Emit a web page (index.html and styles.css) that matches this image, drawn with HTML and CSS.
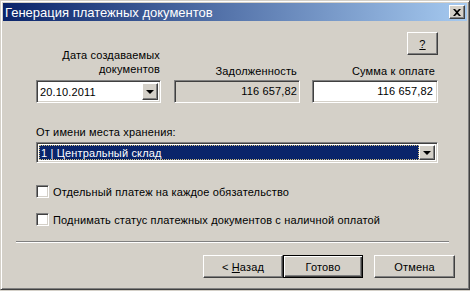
FILE: index.html
```html
<!DOCTYPE html>
<html lang="ru">
<head>
    <meta charset="UTF-8">
    <title>Генерация платежных документов</title>
    <link rel="stylesheet" href="styles.css">
</head>
<body>
    <div class="window">
        <!-- Заголовок окна -->
        <div class="titlebar">
            <span class="title">Генерация платежных документов</span>
            <button class="close-btn" type="button">
                <svg width="8" height="7" viewBox="0 0 8 7"><path d="M0 0h2l2 2 2-2h2L5 3.5 8 7H6L4 5 2 7H0l3-3.5z" fill="#000"/></svg>
            </button>
        </div>

        <div class="client">
            <!-- Даты и суммы -->
            <div class="fields">
                <div class="col col-date">
                    <label class="lbl lbl-two">Дата создаваемых<br>документов</label>
                    <div class="combo sunken">
                        <span class="combo-text">20.10.2011</span>
                        <span class="arrow-btn raised"><i class="arrow"></i></span>
                    </div>
                </div>
                <div class="col col-debt">
                    <label class="lbl">Задолженность</label>
                    <div class="edit sunken disabled">116 657,82</div>
                </div>
                <div class="col col-sum">
                    <button class="btn raised help-btn" type="button"><u>?</u></button>
                    <label class="lbl">Сумма к оплате</label>
                    <div class="edit sunken">116 657,82</div>
                </div>
            </div>

            <!-- Склад -->
            <div class="store">
                <label class="lbl-left">От имени места хранения:</label>
                <div class="combo sunken store-combo">
                    <span class="combo-text selected"><span class="focus">1 | Центральный склад</span></span>
                    <span class="arrow-btn raised"><i class="arrow"></i></span>
                </div>
            </div>

            <!-- Флажки -->
            <div class="checks">
                <label class="check"><span class="box sunken"></span>Отдельный платеж на каждое обязательство</label>
                <label class="check"><span class="box sunken"></span>Поднимать статус платежных документов с наличной оплатой</label>
            </div>

            <div class="separator"></div>

            <!-- Кнопки мастера -->
            <div class="buttons">
                <button class="btn raised" type="button">&lt; <u>Н</u>азад</button>
                <button class="btn raised default" type="button">Готово</button>
                <button class="btn raised cancel" type="button">Отмена</button>
            </div>
        </div>
    </div>
</body>
</html>
```

FILE: styles.css
```css
/* Общие настройки */
body {
    margin: 0;
    background-color: #d4d0c8;
    font-family: "Liberation Sans", Arial, sans-serif;
    font-size: 11px;
    letter-spacing: 0.15px;
    color: #000;
}

.window {
    width: 470px;
    height: 290px;
    box-sizing: border-box;
    border: 1px solid;
    border-color: #d4d0c8 #404040 #404040 #d4d0c8;
    box-shadow: inset 1px 1px #fff, inset -1px -1px #808080;
    padding: 2px;
    background-color: #d4d0c8;
}

/* Заголовок */
.titlebar {
    height: 18px;
    display: flex;
    align-items: center;
    justify-content: space-between;
    padding: 0 2px 0 2px;
    background: linear-gradient(to right, #0a246a, #a6caf0);
}

.title {
    color: #fff;
    font-size: 13px;
    letter-spacing: 0;
}

.close-btn {
    width: 16px;
    height: 14px;
    padding: 0;
    display: flex;
    align-items: center;
    justify-content: center;
    background-color: #d4d0c8;
    border: 1px solid;
    border-color: #fff #404040 #404040 #fff;
    box-shadow: inset -1px -1px #808080;
}

/* 3D рамки */
.sunken {
    box-sizing: border-box;
    border: 1px solid;
    border-color: #808080 #fff #fff #808080;
    box-shadow: inset 1px 1px #404040, inset -1px -1px #d4d0c8;
    background-color: #fff;
}

.raised {
    box-sizing: border-box;
    border: 1px solid;
    border-color: #fff #404040 #404040 #fff;
    box-shadow: inset -1px -1px #808080, inset 1px 1px #d4d0c8;
    background-color: #d4d0c8;
}

.client {
    padding: 11px 29px 0 33px;
}

/* Поля сверху */
.fields {
    display: flex;
    align-items: flex-end;
}

.col {
    display: flex;
    flex-direction: column;
}

.col-date {
    width: 125px;
}

.col-debt {
    width: 126px;
    margin-left: 13px;
}

.col-sum {
    width: 126px;
    margin-left: 12px;
}

.lbl {
    text-align: right;
    line-height: 13px;
    padding-right: 3px;
    margin-bottom: 2px;
}

.lbl-two {
    line-height: 14px;
    padding-right: 1px;
    margin-bottom: 4px;
}

.help-btn {
    align-self: flex-end;
    width: 31px;
    height: 23px;
    margin-bottom: 10px;
}

.edit {
    height: 23px;
    line-height: 21px;
    text-align: right;
    padding-right: 4px;
}

.edit.disabled {
    background-color: #d4d0c8;
    padding-right: 2px;
}

.combo {
    height: 23px;
    display: flex;
    align-items: stretch;
    padding: 2px;
}

.combo-text {
    flex: 1;
    line-height: 19px;
    padding-left: 1px;
}

.arrow-btn {
    width: 16px;
    display: flex;
    align-items: center;
    justify-content: center;
}

.arrow {
    width: 0;
    height: 0;
    border-left: 4px solid transparent;
    border-right: 4px solid transparent;
    border-top: 4px solid #000;
    margin-top: 1px;
}

/* Склад */
.store {
    margin-top: 23px;
}

.lbl-left {
    display: block;
    line-height: 13px;
    margin-bottom: 3px;
}

.store-combo {
    width: 402px;
    height: 21px;
}

.combo-text.selected {
    background-color: #0a246a;
    color: #fff;
    line-height: 17px;
    padding: 0;
    display: flex;
}

.focus {
    flex: 1;
    border: 1px dotted #d4c080;
    line-height: 15px;
    padding-left: 1px;
}

/* Флажки */
.checks {
    margin-top: 22px;
    display: flex;
    flex-direction: column;
    gap: 15px;
}

.check {
    display: flex;
    align-items: center;
    height: 13px;
}

.box {
    width: 13px;
    height: 13px;
    margin-right: 4px;
}

.separator {
    margin: 15px -11px 0 -20px;
    border-top: 1px solid #808080;
    border-bottom: 1px solid #fff;
    height: 0;
}

/* Кнопки */
.buttons {
    display: flex;
    justify-content: flex-end;
    margin: 12px -17px 0 0;
}

.btn {
    font-family: inherit;
    font-size: 11px;
    letter-spacing: inherit;
    color: #000;
    padding: 0;
}

.buttons .btn {
    width: 80px;
    height: 23px;
}

.btn.default {
    border: 1px solid #000;
    box-shadow: inset 1px 1px #fff, inset -1px -1px #404040, inset -2px -2px #808080;
}

.btn.cancel {
    width: 81px;
    margin-left: 11px;
}
```
